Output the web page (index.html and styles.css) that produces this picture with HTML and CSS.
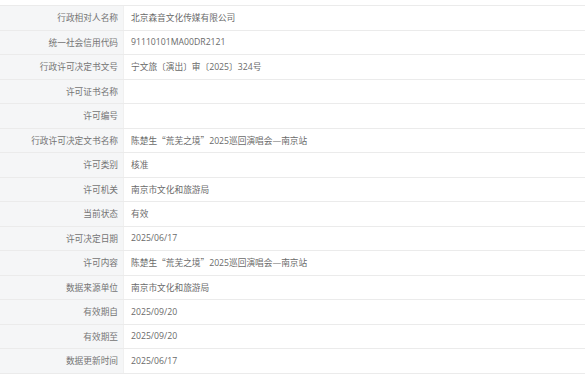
FILE: index.html
```html
<!DOCTYPE html>
<html lang="zh-CN">
<head>
<meta charset="utf-8">
<link rel="stylesheet" href="styles.css">
</head>
<body>
<div class="table">
  <div class="row"><div class="label">行政相对人名称</div><div class="value">北京森音文化传媒有限公司</div></div>
  <div class="row"><div class="label">统一社会信用代码</div><div class="value">91110101MA00DR2121</div></div>
  <div class="row"><div class="label">行政许可决定书文号</div><div class="value">宁文旅〔演出〕审〔2025〕324号</div></div>
  <div class="row"><div class="label">许可证书名称</div><div class="value"></div></div>
  <div class="row"><div class="label">许可编号</div><div class="value"></div></div>
  <div class="row"><div class="label">行政许可决定文书名称</div><div class="value"><span>陈楚生<span class="cjk">“</span>荒芜之境<span class="cjk">”</span>2025巡回演唱会—南京站</span></div></div>
  <div class="row"><div class="label">许可类别</div><div class="value">核准</div></div>
  <div class="row"><div class="label">许可机关</div><div class="value">南京市文化和旅游局</div></div>
  <div class="row"><div class="label">当前状态</div><div class="value">有效</div></div>
  <div class="row"><div class="label">许可决定日期</div><div class="value">2025/06/17</div></div>
  <div class="row"><div class="label">许可内容</div><div class="value"><span>陈楚生<span class="cjk">“</span>荒芜之境<span class="cjk">”</span>2025巡回演唱会—南京站</span></div></div>
  <div class="row"><div class="label">数据来源单位</div><div class="value">南京市文化和旅游局</div></div>
  <div class="row"><div class="label">有效期自</div><div class="value">2025/09/20</div></div>
  <div class="row"><div class="label">有效期至</div><div class="value">2025/09/20</div></div>
  <div class="row"><div class="label">数据更新时间</div><div class="value">2025/06/17</div></div>
</div>
</body>
</html>
```
FILE: styles.css
```css
html, body {
  margin: 0;
  padding: 0;
  background: #ffffff;
}
body {
  font-family: "Open Sans", "Noto Sans CJK SC", sans-serif;
  font-size: 8.7px;
  color: #6a6a6a;
  padding-top: 5px;
}
.table {
  border-top: 1px solid #ebebeb;
}
.row {
  display: grid;
  grid-template-columns: 124px 1fr;
  height: 24.53px;
  box-sizing: border-box;
  border-bottom: 1px solid #ebebeb;
}
.label {
  background: #f5f6f7;
  color: #747474;
  padding-right: 5px;
  display: flex;
  align-items: center;
  justify-content: flex-end;
  border-right: 1px solid #f0f0f0;
}
.value {
  display: flex;
  align-items: center;
  padding-left: 7px;
  color: #6a6a6a;
}
.cjk {
  font-family: "Noto Sans CJK SC", sans-serif;
}
```
